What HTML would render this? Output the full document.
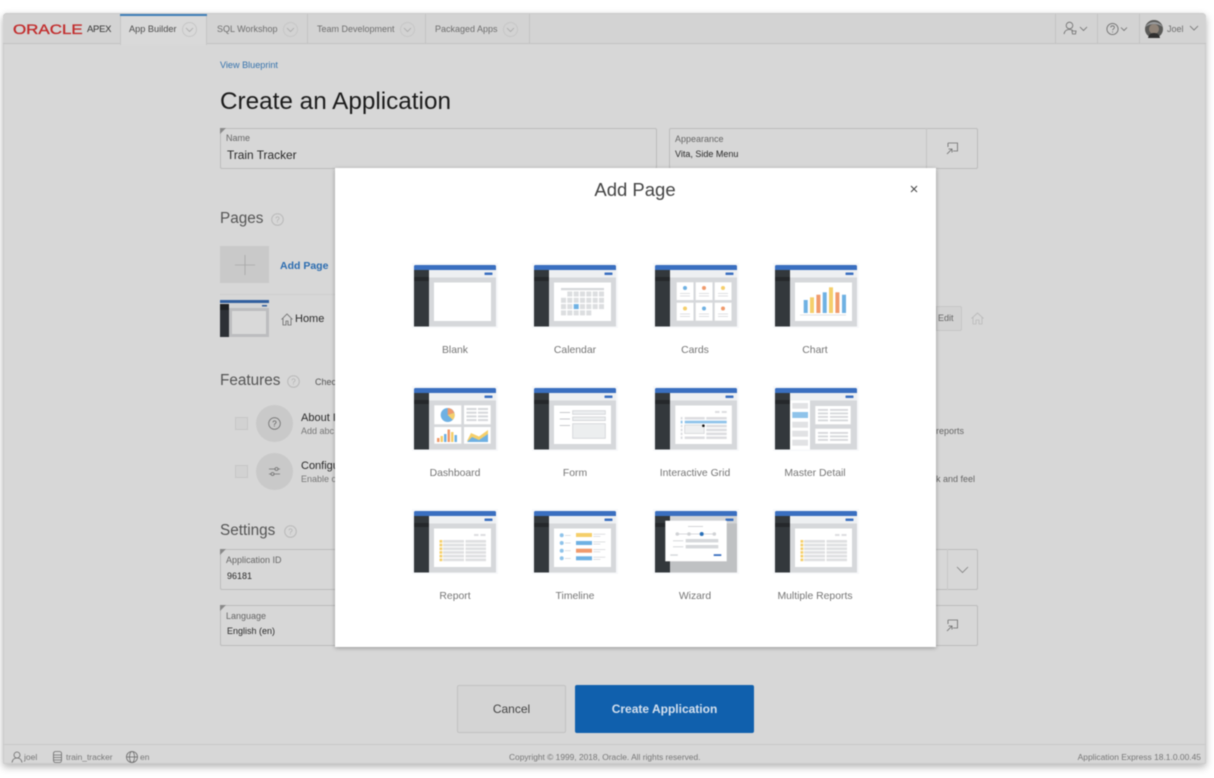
<!DOCTYPE html>
<html lang="en">
<head>
<meta charset="utf-8">
<title>Create an Application</title>
<style>
html,body{margin:0;padding:0;background:#fff}
body{width:1214px;height:778px;overflow:hidden;position:relative;font-family:"Liberation Sans",sans-serif;filter:blur(.4px)}
.a{position:absolute;white-space:nowrap}
#page{position:absolute;left:3px;top:13px;width:1203px;height:751px;background:#d7d7d7;border-radius:4px 4px 2px 2px;box-shadow:0 3px 8px rgba(0,0,0,.3);outline:1px solid #cbcbcb;outline-offset:-1px}
.sep{position:absolute;top:14px;height:30px;width:1px;background:#c4c4c4}
.tab{font-size:9px;color:#6e6e6e}
.chev{position:absolute;width:15px;height:15px;border:1px solid #c6c6c6;border-radius:50%;box-sizing:border-box}
.fld{position:absolute;background:#d7d7d7;border:1px solid #bcbcbc;box-sizing:border-box;border-radius:2px}
.lbl{font-size:9px;color:#666}
.val{font-size:9px;color:#2a2a2a}
.h2{font-size:15.300px;color:#545454}
svg{position:absolute;overflow:visible}
.i{fill:none;stroke:#707070;stroke-width:.85}
.t{position:absolute;width:86px;height:65px}
.cap{position:absolute;width:160px;text-align:center;font-size:10.400px;color:#757575;line-height:14px}
</style>
</head>
<body>
<svg width="0" height="0" style="position:absolute">
<defs>
<symbol id="b" viewBox="0 0 86 65">
<rect width="86" height="65" fill="#f7f8fa"/>
<rect x="17" y="7" width="67" height="56.500" fill="#d6d8db"/>
<rect x="17" y="7" width="67" height="7.500" fill="#eef0f2"/>
<rect x="2" y="7" width="15" height="56.500" fill="#33383c"/>
<rect x="2" y="14" width="15" height="4" fill="#25282b"/>
<path d="M2 7V3.500Q2 2 3.500 2H82.500Q84 2 84 3.500V7Z" fill="#3a6fc0"/>
<rect x="72.500" y="9.500" width="8" height="2.500" rx=".6" fill="#3a6fc0"/>
</symbol>
<symbol id="r" viewBox="0 0 86 65">
<use href="#b" width="86" height="65"/>
<rect x="22" y="19.500" width="57" height="38.500" fill="#fff"/>
<rect x="62" y="25" width="4.500" height="2" fill="#dcdde0"/><rect x="68.500" y="25" width="5" height="2" fill="#dcdde0"/>
<g fill="#f5cf6b"><rect x="27.500" y="31" width="2.800" height="2.700"/><rect x="27.500" y="34.700" width="2.800" height="2.700"/><rect x="27.500" y="38.400" width="2.800" height="2.700"/><rect x="27.500" y="42.100" width="2.800" height="2.700"/><rect x="27.500" y="45.800" width="2.800" height="2.700"/><rect x="27.500" y="49.500" width="2.800" height="2.700"/></g>
<g fill="#dfe0e2"><rect x="31" y="31" width="21" height="2.700"/><rect x="53.500" y="31" width="20.500" height="2.700"/><rect x="31" y="34.700" width="21" height="2.700"/><rect x="53.500" y="34.700" width="20.500" height="2.700"/><rect x="31" y="38.400" width="21" height="2.700"/><rect x="53.500" y="38.400" width="20.500" height="2.700"/><rect x="31" y="42.100" width="21" height="2.700"/><rect x="53.500" y="42.100" width="20.500" height="2.700"/><rect x="31" y="45.800" width="21" height="2.700"/><rect x="53.500" y="45.800" width="20.500" height="2.700"/><rect x="31" y="49.500" width="21" height="2.700"/><rect x="53.500" y="49.500" width="20.500" height="2.700"/></g>
</symbol>
</defs>
</svg>

<div id="page"></div>

<!-- Header -->
<div class="a" style="left:3px;top:14px;width:1203px;height:30px;background:#d3d3d3;border-bottom:1px solid #c2c2c2;box-sizing:border-box;border-radius:4px 4px 0 0"></div>
<div class="a" style="left:13px;top:21px;font-size:14px;color:#c22d2d;-webkit-text-stroke:.35px #c22d2d;transform:scaleX(1.21);transform-origin:left">ORACLE</div>
<div class="a" style="left:87px;top:24px;font-size:9.500px;color:#333;letter-spacing:-.3px">APEX</div>
<div class="a" style="left:120px;top:14px;width:87px;height:31px;background:#d9d9d9;border-left:1px solid #c6c6c6;border-right:1px solid #c6c6c6;box-sizing:border-box"></div>
<div class="a" style="left:120px;top:14px;width:87px;height:2px;background:#3f7fb8"></div>
<div class="a tab" style="left:129px;top:24px;color:#4c4c4c;font-size:9.200px">App Builder</div>
<div class="chev" style="left:182px;top:22px"></div>
<div class="a tab" style="left:217px;top:24px">SQL Workshop</div>
<div class="chev" style="left:283px;top:22px"></div>
<div class="sep" style="left:307px"></div>
<div class="a tab" style="left:317px;top:24px">Team Development</div>
<div class="chev" style="left:400px;top:22px"></div>
<div class="sep" style="left:425px"></div>
<div class="a tab" style="left:435px;top:24px">Packaged Apps</div>
<div class="chev" style="left:503px;top:22px"></div>
<div class="sep" style="left:529px"></div>
<svg style="left:182px;top:22px" width="15" height="15" viewBox="0 0 15 15"><path d="M4 6l3.500 3.500L11 6" fill="none" stroke="#aaa" stroke-width=".85"/></svg>
<svg style="left:283px;top:22px" width="15" height="15" viewBox="0 0 15 15"><path d="M4 6l3.500 3.500L11 6" fill="none" stroke="#aaa" stroke-width=".85"/></svg>
<svg style="left:400px;top:22px" width="15" height="15" viewBox="0 0 15 15"><path d="M4 6l3.500 3.500L11 6" fill="none" stroke="#aaa" stroke-width=".85"/></svg>
<svg style="left:503px;top:22px" width="15" height="15" viewBox="0 0 15 15"><path d="M4 6l3.500 3.500L11 6" fill="none" stroke="#aaa" stroke-width=".85"/></svg>

<div class="sep" style="left:1055px"></div>
<div class="sep" style="left:1097px"></div>
<div class="sep" style="left:1139px"></div>
<svg style="left:1063px;top:21px" width="26" height="16" viewBox="0 0 26 16"><circle cx="6.500" cy="4.500" r="3.300" class="i"/><path d="M1 13c.5-3 2.500-4.500 5.500-4.500 1.500 0 2.500.4 3.300 1" class="i"/><path d="M9 10h4l-.5 3h-3z" class="i"/><path d="M17 6l3.500 3.500L24 6" class="i"/></svg>
<svg style="left:1105px;top:22px" width="26" height="16" viewBox="0 0 26 16"><circle cx="7.500" cy="7" r="5.600" class="i"/><path d="M5.700 5.500c0-2.300 3.700-2.300 3.700 0 0 1.300-1.800 1.300-1.800 2.800" class="i"/><circle cx="7.600" cy="10" r=".5" fill="#666"/><path d="M16 5.500l3 3 3-3" class="i"/></svg>
<svg style="left:1145px;top:20px" width="18" height="18" viewBox="0 0 18 18"><circle cx="9" cy="9" r="9" fill="#5a5a58"/><circle cx="9" cy="9" r="5" fill="#8f8378"/><path d="M0 7c3-4 6-5 9-5s6 1 9 5c-3-2-6-3-9-3S3 5 0 7z" fill="#9a9c9e"/><path d="M3 18c1-4 3-5 6-5s5 1 6 5z" fill="#2f2f2f"/></svg>
<div class="a tab" style="left:1167px;top:24px">Joel</div>
<svg style="left:1189px;top:24px" width="10" height="8" viewBox="0 0 10 8"><path d="M1 2l4 4 4-4" class="i"/></svg>

<!-- Page content -->
<div class="a" style="left:220px;top:59.500px;font-size:9.100px;color:#3673ad">View Blueprint</div>
<div class="a" style="left:220px;top:88px;font-size:24.300px;color:#1c1c1c">Create an Application</div>

<div class="fld" style="left:220px;top:128px;width:437px;height:41px"></div>
<svg style="left:220px;top:128px" width="6" height="6"><path d="M0 0h6L0 6z" fill="#8a8a8a"/></svg>
<div class="a lbl" style="left:226px;top:133px">Name</div>
<div class="a" style="left:227px;top:148px;font-size:11.900px;color:#2a2a2a">Train Tracker</div>

<div class="fld" style="left:669px;top:128px;width:309px;height:41px"></div>
<div class="a" style="left:926px;top:128px;width:1px;height:41px;background:#c4c4c4"></div>
<div class="a lbl" style="left:675px;top:134px">Appearance</div>
<div class="a val" style="left:675px;top:149px">Vita, Side Menu</div>
<svg style="left:946px;top:142px" width="13" height="13" viewBox="0 0 13 13"><path d="M2 1h9.500v8H7M2 1v4M1 12l5-5M2.500 7H6v3.500" class="i"/></svg>

<div class="a h2" style="left:220px;top:210px">Pages</div>
<svg style="left:271px;top:213px" width="13" height="13" viewBox="0 0 13 13"><circle cx="6.500" cy="6.500" r="5.800" fill="none" stroke="#b9b9b9"/><text x="6.500" y="9.300" font-size="8" text-anchor="middle" fill="#b0b0b0" font-family="Liberation Sans">?</text></svg>
<div class="a" style="left:220px;top:246px;width:49px;height:37px;background:#c9c9c9"></div>
<svg style="left:235px;top:255px" width="20" height="20"><path d="M10 0v20M0 10h20" stroke="#a8a8a8" fill="none" stroke-width=".85"/></svg>
<div class="a" style="left:280px;top:260px;font-size:10.500px;font-weight:bold;color:#2b6cb0">Add Page</div>
<div class="a" style="left:220px;top:294px;width:115px;height:1px;background:#cecece"></div>

<svg style="left:220px;top:300px" width="49" height="37" viewBox="0 0 49 37"><rect width="49" height="37" fill="#bcbdbf"/><rect x="12" y="11" width="34" height="23" fill="#d9d9d9"/><rect x="0" y="3" width="49" height="5" fill="#d4d5d6"/><rect x="0" y="4" width="9" height="33" fill="#2d3136"/><rect x="0" y="4" width="9" height="6" fill="#1e2124"/><rect y="0" width="49" height="3" fill="#315f9f"/><rect x="42" y="5" width="5" height="1.500" fill="#315f9f"/></svg>
<svg style="left:281px;top:312.500px" width="12" height="13" viewBox="0 0 12 13"><path d="M.5 6.500L6 1l5.500 5.500M2 5.500V12h3V8h2v4h3V5.500" class="i"/></svg>
<div class="a" style="left:295px;top:313px;font-size:11px;color:#2c2c2c">Home</div>

<div class="a h2" style="left:220px;top:372px">Features</div>
<svg style="left:287px;top:375px" width="13" height="13" viewBox="0 0 13 13"><circle cx="6.500" cy="6.500" r="5.800" fill="none" stroke="#b9b9b9"/><text x="6.500" y="9.300" font-size="8" text-anchor="middle" fill="#b0b0b0" font-family="Liberation Sans">?</text></svg>
<div class="a" style="left:315px;top:376.500px;font-size:9px;color:#555">Chec</div>

<div class="a" style="left:235px;top:417px;width:13px;height:13px;background:#d2d2d2;border:1px solid #c6c6c6;box-sizing:border-box"></div>
<div class="a" style="left:256px;top:405px;width:37px;height:37px;border-radius:50%;background:#c9c9c9"></div>
<svg style="left:268px;top:417px" width="13" height="13" viewBox="0 0 13 13"><circle cx="6.500" cy="6.500" r="5.800" fill="none" stroke="#707070" stroke-width=".85"/><text x="6.500" y="9.300" font-size="8" text-anchor="middle" fill="#5c5c5c" font-family="Liberation Sans">?</text></svg>
<div class="a" style="left:301px;top:412px;font-size:11px;color:#2a2a2a">About I</div>
<div class="a" style="left:301px;top:426px;font-size:9px;color:#777">Add abc</div>

<div class="a" style="left:235px;top:465px;width:13px;height:13px;background:#d2d2d2;border:1px solid #c6c6c6;box-sizing:border-box"></div>
<div class="a" style="left:256px;top:453px;width:37px;height:37px;border-radius:50%;background:#c9c9c9"></div>
<svg style="left:268px;top:466px" width="13" height="11" viewBox="0 0 13 11"><path d="M1 3h6M10 3h2M1 8h2M6 8h6" class="i"/><circle cx="8.500" cy="3" r="1.500" class="i"/><circle cx="4.500" cy="8" r="1.500" class="i"/></svg>
<div class="a" style="left:301px;top:460px;font-size:11px;color:#2a2a2a">Configu</div>
<div class="a" style="left:301px;top:474px;font-size:9px;color:#777">Enable c</div>

<div class="a h2" style="left:220px;top:522px">Settings</div>
<svg style="left:284px;top:525px" width="13" height="13" viewBox="0 0 13 13"><circle cx="6.500" cy="6.500" r="5.800" fill="none" stroke="#b9b9b9"/><text x="6.500" y="9.300" font-size="8" text-anchor="middle" fill="#b0b0b0" font-family="Liberation Sans">?</text></svg>

<div class="fld" style="left:220px;top:549px;width:758px;height:41px"></div>
<svg style="left:220px;top:549px" width="6" height="6"><path d="M0 0h6L0 6z" fill="#8a8a8a"/></svg>
<div class="a" style="left:947px;top:549px;width:1px;height:41px;background:#c8c8c8"></div>
<div class="a lbl" style="left:226px;top:555px">Application ID</div>
<div class="a val" style="left:227px;top:571px">96181</div>
<svg style="left:956px;top:566px" width="13" height="8" viewBox="0 0 13 8"><path d="M1 1l5.500 5.500L12 1" fill="none" stroke="#808080" stroke-width=".85"/></svg>

<div class="fld" style="left:220px;top:605px;width:758px;height:41px"></div>
<svg style="left:220px;top:605px" width="6" height="6"><path d="M0 0h6L0 6z" fill="#8a8a8a"/></svg>
<div class="a lbl" style="left:226px;top:611px">Language</div>
<div class="a val" style="left:227px;top:626px">English (en)</div>
<svg style="left:946px;top:619px" width="13" height="13" viewBox="0 0 13 13"><path d="M2 1h9.500v8H7M2 1v4M1 12l5-5M2.500 7H6v3.500" class="i"/></svg>

<div class="a" style="left:936px;top:306px;width:26px;height:25px;background:#d2d2d2;border:1px solid #c6c6c6;box-sizing:border-box;border-radius:0 2px 2px 0"></div>
<div class="a" style="left:938px;top:313px;font-size:9px;color:#666">Edit</div>
<svg style="left:971px;top:312px" width="13" height="13" viewBox="0 0 13 13"><path d="M.5 6.500L6.500 1l6 5.500M2 5.500V12h3V8h3v4h3V5.500" fill="none" stroke="#bbb" stroke-width=".85"/></svg>
<div class="a" style="left:936px;top:426px;font-size:9px;color:#666">reports</div>
<div class="a" style="left:936px;top:474px;font-size:9px;color:#666">k and feel</div>

<div class="a" style="left:457px;top:685px;width:109px;height:48px;background:#d4d4d4;border:1px solid #c2c2c2;box-sizing:border-box;border-radius:2px;text-align:center;line-height:47px;font-size:12px;color:#444">Cancel</div>
<div class="a" style="left:575px;top:685px;width:179px;height:48px;background:#1060ad;border-radius:2px;text-align:center;line-height:48px;font-size:12px;font-weight:bold;color:#d4e0ee">Create Application</div>

<!-- Footer -->
<div class="a" style="left:3px;top:744px;width:1203px;height:1px;background:#c8c8c8"></div>
<svg style="left:11px;top:751px" width="12" height="12" viewBox="0 0 12 12"><circle cx="6" cy="4" r="3" class="i"/><path d="M1 11.500c.5-3 2.500-4.500 5-4.500s4.500 1.500 5 4.500" class="i"/></svg>
<div class="a" style="left:24px;top:752px;font-size:8.500px;color:#777">joel</div>
<svg style="left:53px;top:751px" width="10" height="12" viewBox="0 0 10 12"><rect x=".5" y=".5" width="8" height="11" rx="2" class="i"/><path d="M.5 4h8M.5 6.500h8M.5 9h8" class="i"/></svg>
<div class="a" style="left:66px;top:752px;font-size:8.400px;color:#777">train_tracker</div>
<svg style="left:126px;top:751px" width="12" height="12" viewBox="0 0 12 12"><circle cx="6" cy="6" r="5.500" class="i"/><ellipse cx="6" cy="6" rx="2.500" ry="5.500" class="i"/><path d="M.5 6h11" class="i"/></svg>
<div class="a" style="left:140px;top:752px;font-size:8.500px;color:#777">en</div>
<div class="a" style="left:509px;top:752px;font-size:8.400px;color:#777">Copyright © 1999, 2018, Oracle. All rights reserved.</div>
<div class="a" style="right:13px;top:752px;font-size:8.450px;color:#777">Application Express 18.1.0.00.45</div>

<!-- Modal -->
<div class="a" style="left:335px;top:168px;width:601px;height:479px;background:#fff;box-shadow:0 1px 4px rgba(0,0,0,.3)"></div>
<div class="a" style="left:335px;top:179px;width:600px;text-align:center;font-size:18.500px;color:#444">Add Page</div>
<svg style="left:910px;top:185px" width="8" height="8" viewBox="0 0 8 8"><path d="M1 1l6 6M7 1L1 7" fill="none" stroke="#444"/></svg>

<!-- Row 1 -->
<svg class="t" style="left:412px;top:263px" viewBox="0 0 86 65"><use href="#b" width="86" height="65"/><rect x="22" y="19.500" width="57" height="38.500" fill="#fff"/></svg>
<svg class="t" style="left:532px;top:263px" viewBox="0 0 86 65"><use href="#b" width="86" height="65"/><rect x="22" y="19.500" width="57" height="38.500" fill="#fff"/><rect x="29" y="25" width="43" height="2.200" fill="#d6d8db"/>
<g fill="#dcdee0"><rect x="35.300" y="28.500" width="5" height="5"/><rect x="41.700" y="28.500" width="5" height="5"/><rect x="48" y="28.500" width="5" height="5"/><rect x="54.300" y="28.500" width="5" height="5"/><rect x="60.700" y="28.500" width="5" height="5"/><rect x="67" y="28.500" width="5" height="5"/>
<rect x="29" y="34.800" width="5" height="5"/><rect x="35.300" y="34.800" width="5" height="5"/><rect x="41.700" y="34.800" width="5" height="5"/><rect x="48" y="34.800" width="5" height="5"/><rect x="54.300" y="34.800" width="5" height="5"/><rect x="60.700" y="34.800" width="5" height="5"/><rect x="67" y="34.800" width="5" height="5"/>
<rect x="29" y="41.100" width="5" height="5"/><rect x="35.300" y="41.100" width="5" height="5"/><rect x="48" y="41.100" width="5" height="5"/><rect x="54.300" y="41.100" width="5" height="5"/><rect x="60.700" y="41.100" width="5" height="5"/><rect x="67" y="41.100" width="5" height="5"/>
<rect x="29" y="47.400" width="5" height="5"/><rect x="35.300" y="47.400" width="5" height="5"/><rect x="41.700" y="47.400" width="5" height="5"/><rect x="48" y="47.400" width="5" height="5"/><rect x="54.300" y="47.400" width="5" height="5"/></g><rect x="41.700" y="41.100" width="5" height="5" fill="#6fb1e3"/></svg>
<svg class="t" style="left:652.500px;top:263px" viewBox="0 0 86 65"><use href="#b" width="86" height="65"/>
<g fill="#fff"><rect x="23.700" y="19.300" width="16.800" height="17.800"/><rect x="42.700" y="19.300" width="16.800" height="17.800"/><rect x="61.700" y="19.300" width="16.800" height="17.800"/><rect x="23.700" y="39.700" width="16.800" height="18"/><rect x="42.700" y="39.700" width="16.800" height="18"/><rect x="61.700" y="39.700" width="16.800" height="18"/></g>
<circle cx="32" cy="25" r="2" fill="#6fb1e3"/><circle cx="51" cy="25" r="2" fill="#f09a6c"/><circle cx="70" cy="25" r="2" fill="#f5cf6b"/><circle cx="32" cy="45.500" r="2" fill="#f5cf6b"/><circle cx="51" cy="45.500" r="2" fill="#6fb1e3"/><circle cx="70" cy="45.500" r="2" fill="#f09a6c"/>
<g fill="#dcdde0"><rect x="27" y="30" width="10" height=".9"/><rect x="27" y="32.500" width="10" height=".9"/><rect x="46" y="30" width="10" height=".9"/><rect x="46" y="32.500" width="10" height=".9"/><rect x="65" y="30" width="10" height=".9"/><rect x="65" y="32.500" width="10" height=".9"/><rect x="27" y="50.500" width="10" height=".9"/><rect x="27" y="53" width="10" height=".9"/><rect x="46" y="50.500" width="10" height=".9"/><rect x="46" y="53" width="10" height=".9"/><rect x="65" y="50.500" width="10" height=".9"/><rect x="65" y="53" width="10" height=".9"/></g></svg>
<svg class="t" style="left:773px;top:263px" viewBox="0 0 86 65"><use href="#b" width="86" height="65"/><rect x="22" y="19.500" width="57" height="38.500" fill="#fff"/>
<rect x="30.700" y="37" width="4" height="13" fill="#6fb1e3"/><rect x="37" y="34.300" width="4" height="15.700" fill="#f5cf6b"/><rect x="43.400" y="31.700" width="4" height="18.300" fill="#f09a6c"/><rect x="49.700" y="29.300" width="4" height="20.700" fill="#6fb1e3"/><rect x="56" y="24.300" width="4" height="25.700" fill="#f5cf6b"/><rect x="62.400" y="29.300" width="4" height="20.700" fill="#f09a6c"/><rect x="69" y="31.700" width="4" height="18.300" fill="#6fb1e3"/><rect x="27" y="51.500" width="46" height="1" fill="#e2e3e5"/></svg>
<div class="cap" style="left:375px;top:344px">Blank</div>
<div class="cap" style="left:495px;top:344px">Calendar</div>
<div class="cap" style="left:615px;top:344px">Cards</div>
<div class="cap" style="left:735px;top:344px">Chart</div>

<!-- Row 2 -->
<svg class="t" style="left:412px;top:386px" viewBox="0 0 86 65"><use href="#b" width="86" height="65"/>
<g fill="#fff"><rect x="22.300" y="19.300" width="27" height="19"/><rect x="52" y="19.300" width="26.700" height="19"/><rect x="22.300" y="41" width="27" height="16.700"/><rect x="52" y="41" width="26.700" height="16.700"/></g>
<circle cx="35.700" cy="29" r="7" fill="#6fb1e3"/><path d="M35.700 29V22a7 7 0 0 1 6.600 4.700z" fill="#f09a6c"/><path d="M35.700 29l6.600-2.300a7 7 0 0 1-1.600 7.200z" fill="#f5cf6b"/>
<g fill="#d6d8db"><rect x="54.500" y="22" width="10" height="2"/><rect x="66" y="22" width="10" height="2"/><rect x="54.500" y="25.700" width="10" height="2"/><rect x="66" y="25.700" width="10" height="2"/><rect x="54.500" y="29.400" width="10" height="2"/><rect x="66" y="29.400" width="10" height="2"/><rect x="54.500" y="33.100" width="10" height="2"/><rect x="66" y="33.100" width="10" height="2"/></g>
<rect x="25" y="52" width="2.500" height="4" fill="#f09a6c"/><rect x="28.500" y="50" width="2.500" height="6" fill="#f5cf6b"/><rect x="32" y="48" width="2.500" height="8" fill="#6fb1e3"/><rect x="35.500" y="43.500" width="2.500" height="12.500" fill="#f09a6c"/><rect x="39" y="46" width="2.500" height="10" fill="#f5cf6b"/><rect x="42.500" y="49" width="2.500" height="7" fill="#6fb1e3"/>
<path d="M55 55l4-8 8 3.500 9-6.500v11z" fill="#f5cf6b"/><path d="M55 56l5-5 7 3 9-6v8z" fill="#6fb1e3"/></svg>
<svg class="t" style="left:532px;top:386px" viewBox="0 0 86 65"><use href="#b" width="86" height="65"/><rect x="22" y="19.500" width="57" height="38.500" fill="#fff"/>
<g fill="#c8cacd"><rect x="27.700" y="26" width="10.300" height="1"/><rect x="27.700" y="32.500" width="10.300" height="1"/><rect x="27.700" y="39" width="10.300" height="1"/></g>
<g fill="#eceeef" stroke="#d0d2d5" stroke-width=".8"><rect x="40.700" y="24.700" width="32.600" height="3.600"/><rect x="40.700" y="31" width="32.600" height="3.600"/><rect x="40.700" y="37.700" width="32.600" height="14.600"/></g></svg>
<svg class="t" style="left:652.500px;top:386px" viewBox="0 0 86 65"><use href="#b" width="86" height="65"/><rect x="22.300" y="19.500" width="56.500" height="38.500" fill="#fff"/>
<rect x="62" y="25" width="4.500" height="2" fill="#dcdde0"/><rect x="68.700" y="25" width="5" height="2" fill="#dcdde0"/>
<g fill="#dcdde0"><rect x="27.700" y="31" width="1.800" height="2.500"/><rect x="31.700" y="31" width="20" height="2.500"/><rect x="53.300" y="31" width="20.400" height="2.500"/><rect x="27.700" y="38.800" width="1.800" height="2.500"/><rect x="53.300" y="38.800" width="20.400" height="2.500"/><rect x="27.700" y="42.700" width="1.800" height="2.500"/><rect x="53.300" y="42.700" width="20.400" height="2.500"/><rect x="27.700" y="46.600" width="1.800" height="2.500"/><rect x="53.300" y="46.600" width="20.400" height="2.500"/><rect x="27.700" y="50.500" width="1.800" height="2.500"/><rect x="31.700" y="50.500" width="20" height="2.500"/><rect x="53.300" y="50.500" width="20.400" height="2.500"/></g>
<rect x="27.700" y="34.700" width="1.800" height="2.700" fill="#8fc3ea"/><rect x="31.700" y="34.700" width="42" height="2.700" fill="#8fc3ea"/>
<rect x="31.700" y="39" width="19.500" height="8.500" fill="#eff0f1" stroke="#d0d2d5" stroke-width=".7"/><circle cx="50.400" cy="39.700" r="1.300" fill="#111"/></svg>
<svg class="t" style="left:773px;top:386px" viewBox="0 0 86 65"><use href="#b" width="86" height="65"/><rect x="17" y="14.500" width="20" height="49" fill="#fff"/>
<g fill="#e1e2e4"><rect x="19.300" y="17" width="15.700" height="5.700"/><rect x="19.300" y="35.700" width="15.700" height="6"/><rect x="19.300" y="44.700" width="15.700" height="6"/><rect x="19.300" y="53.700" width="15.700" height="6"/></g><rect x="19.300" y="26" width="15.700" height="6" fill="#8fc3ea"/>
<rect x="42.300" y="20" width="35.400" height="18.300" fill="#fff"/><rect x="42.300" y="42.700" width="35.400" height="15" fill="#fff"/>
<g fill="#d6d8db"><rect x="45" y="23" width="10" height="1.800"/><rect x="57" y="23" width="18" height="1.800"/><rect x="45" y="26.500" width="10" height="1.800"/><rect x="57" y="26.500" width="18" height="1.800"/><rect x="45" y="30" width="10" height="1.800"/><rect x="57" y="30" width="18" height="1.800"/><rect x="45" y="33.500" width="10" height="1.800"/><rect x="57" y="33.500" width="18" height="1.800"/><rect x="45" y="46" width="10" height="1.800"/><rect x="57" y="46" width="18" height="1.800"/><rect x="45" y="49.500" width="10" height="1.800"/><rect x="57" y="49.500" width="18" height="1.800"/><rect x="45" y="53" width="10" height="1.800"/><rect x="57" y="53" width="18" height="1.800"/></g></svg>
<div class="cap" style="left:375px;top:467px">Dashboard</div>
<div class="cap" style="left:495px;top:467px">Form</div>
<div class="cap" style="left:615px;top:467px">Interactive Grid</div>
<div class="cap" style="left:735px;top:467px">Master Detail</div>

<!-- Row 3 -->
<svg class="t" style="left:412px;top:509px" viewBox="0 0 86 65"><use href="#r" width="86" height="65"/></svg>
<svg class="t" style="left:532px;top:509px" viewBox="0 0 86 65"><use href="#b" width="86" height="65"/><rect x="22" y="19.500" width="57" height="38.500" fill="#fff"/>
<g fill="#8fc3ea"><circle cx="29.700" cy="26.300" r="2"/><circle cx="29.700" cy="34" r="2"/><circle cx="29.700" cy="41.700" r="2"/><circle cx="29.700" cy="49.300" r="2"/></g>
<g fill="#d6d8db"><rect x="33" y="26" width="5.700" height=".8"/><rect x="33" y="33.600" width="5.700" height=".8"/><rect x="33" y="41.300" width="5.700" height=".8"/><rect x="33" y="49" width="5.700" height=".8"/><rect x="61.300" y="24.800" width="12" height=".8"/><rect x="61.300" y="27" width="7" height=".8"/><rect x="61.300" y="32.500" width="12" height=".8"/><rect x="61.300" y="34.700" width="7" height=".8"/><rect x="61.300" y="40.200" width="12" height=".8"/><rect x="61.300" y="42.400" width="7" height=".8"/><rect x="61.300" y="47.800" width="12" height=".8"/><rect x="61.300" y="50" width="7" height=".8"/></g>
<rect x="44" y="24" width="16" height="4" fill="#f5cf6b"/><rect x="44" y="32" width="16" height="4" fill="#6fb1e3"/><rect x="44" y="39.700" width="16" height="4" fill="#f09a6c"/><rect x="44" y="47.300" width="16" height="4" fill="#6fb1e3"/></svg>
<svg class="t" style="left:652.500px;top:509px" viewBox="0 0 86 65"><use href="#b" width="86" height="65"/><rect x="17" y="14.500" width="67" height="49" fill="#bfc1c3"/><rect x="17" y="7" width="67" height="7.500" fill="#d2d4d6"/><rect x="72.500" y="9.500" width="8" height="2.500" rx=".6" fill="#3a6fc0"/><rect x="12.300" y="11.700" width="61.400" height="40.600" fill="#fff"/>
<rect x="35" y="17" width="15" height=".9" fill="#cfd1d4"/>
<g fill="#d0d2d5"><rect x="24" y="24.600" width="37" height=".8"/><circle cx="24.300" cy="25" r="1.800"/><circle cx="36" cy="25" r="1.800"/><circle cx="61.300" cy="25" r="1.800"/></g><circle cx="48.700" cy="25" r="2" fill="#2a70b8"/>
<g fill="#d6d8db"><rect x="20" y="31.300" width="10.300" height="1"/><rect x="20" y="37.300" width="10.300" height="1"/><rect x="32.700" y="30" width="32.600" height="3.400"/><rect x="32.700" y="36" width="32.600" height="3.400"/><rect x="17.300" y="45.300" width="7.500" height="1.500"/></g><rect x="60.700" y="45.200" width="7.600" height="1.800" fill="#3a6fc0"/></svg>
<svg class="t" style="left:773px;top:509px" viewBox="0 0 86 65"><use href="#r" width="86" height="65"/></svg>
<div class="cap" style="left:375px;top:590px">Report</div>
<div class="cap" style="left:495px;top:590px">Timeline</div>
<div class="cap" style="left:615px;top:590px">Wizard</div>
<div class="cap" style="left:735px;top:590px">Multiple Reports</div>
</body>
</html>
